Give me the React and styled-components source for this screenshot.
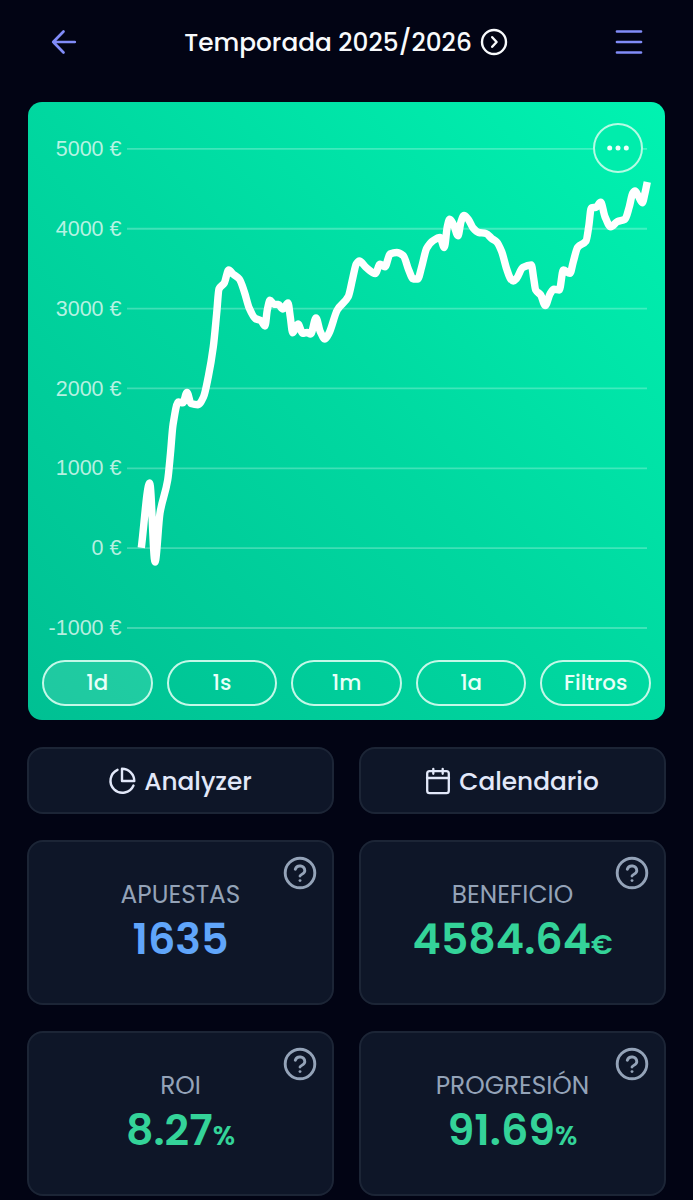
import React from 'react';
import styled, { createGlobalStyle } from 'styled-components';

const GlobalStyle = createGlobalStyle`
  * {
    box-sizing: border-box;
  }

  body {
    background: #020414;
    font-family: Poppins, Inter, 'Open Sans', sans-serif;
    height: 1200px;
    margin: 0;
    overflow: hidden;
  }

  button {
    background: none;
    border: 0;
    color: inherit;
    font: inherit;
    padding: 0;
  }

  svg {
    display: block;
    flex-shrink: 0;
  }
`;

const Page = styled.main`
  height: 1200px;
  overflow: hidden;
  padding: 0 27px;
  width: 693px;
`;

const Header = styled.header`
  align-items: center;
  color: #818cf8;
  display: flex;
  height: 84px;
  justify-content: space-between;
  padding: 0 23px 0 24px;
`;

const Season = styled.button`
  align-items: center;
  color: #f8fafc;
  display: flex;
  font-size: 24.8px;
  font-weight: 500;
  gap: 8px;
  white-space: nowrap;

  span {
    padding-top: 1px;
  }
`;

const ChartCard = styled.section`
  background: linear-gradient(45deg, #00c093 0%, #00d8a0 50%, #00f3b1 100%);
  border-radius: 14px;
  height: 618px;
  margin: 18px 1px 0;
  padding-top: 1px;
  position: relative;
`;

const MoreButton = styled.button`
  align-items: center;
  background: #00edac;
  border: 2px solid #b5fbe4;
  border-radius: 50%;
  display: flex;
  height: 50px;
  justify-content: center;
  position: absolute;
  right: 22px;
  top: 21px;
  width: 50px;
`;

const Filters = styled.div`
  display: grid;
  gap: 14px;
  grid-template-columns: repeat(5, 1fr);
  padding: 0 14px;
`;

const Filter = styled.button`
  background: ${p => (p.$active ? 'rgba(255, 255, 255, 0.12)' : 'none')};
  border: 2px solid #c4f8e8;
  border-radius: 23px;
  color: #e9fff8;
  font-size: 21.3px;
  font-weight: 500;
  height: 46px;
  line-height: 42px;
`;

const Grid = styled.div`
  display: grid;
  gap: 26px 25px;
  grid-template-columns: 1fr 1fr;
  margin-top: 27px;
`;

const ActionButton = styled.button`
  align-items: center;
  background: #0e1628;
  border: 2px solid #1c2536;
  border-radius: 16px;
  color: #e2e8f9;
  display: flex;
  font-size: 24.8px;
  font-weight: 500;
  gap: 8px;
  height: 67px;
  justify-content: center;
  padding-right: 1px;

  span {
    padding-top: 1px;
  }
`;

const StatCard = styled.article`
  align-items: center;
  background: #0e1628;
  border: 2px solid #1c2536;
  border-radius: 16px;
  display: flex;
  flex-direction: column;
  height: 165px;
  padding-top: 37px;
  position: relative;
`;

const HelpButton = styled.button`
  position: absolute;
  right: 15px;
  top: 14px;
`;

const StatLabel = styled.h2`
  color: #94a3b8;
  font-size: 24.8px;
  font-weight: 400;
  line-height: 32px;
  margin: 0;
`;

const StatValue = styled.p`
  color: ${p => p.$color};
  font-size: 42.8px;
  font-weight: 600;
  line-height: 57px;
  margin: 0;

  small {
    font-size: 27px;
  }
`;

const AxisLabel = styled.text`
  fill: rgba(255, 255, 255, 0.72);
  font-family: 'Liberation Sans', Arial, sans-serif;
  font-size: 21.5px;
  text-anchor: end;
`;

const ticks = [5000, 4000, 3000, 2000, 1000, 0, -1000];

const points = [
  [141.3, 547.7], [149.7, 483], [155, 562], [160, 513], [167.7, 480],
  [170.5, 453], [173, 425], [178.3, 402], [182.8, 402.8], [187, 392.5],
  [191, 403.5], [198, 404.7], [203.5, 397], [208.3, 376.7], [213.3, 346.7],
  [216.7, 313], [219, 289], [224.3, 283], [228.7, 270], [233.3, 274.3],
  [239.3, 279], [244.3, 291.7], [249.3, 308.3], [255.3, 318.5], [261, 320.7],
  [265, 326], [267.3, 310], [270, 300.3], [274, 304.3], [278.3, 304.5],
  [283, 309], [288, 303], [290.3, 317], [292.7, 332.7], [298, 324],
  [302.7, 333.3], [307, 332.5], [310.7, 334], [316, 318], [320.3, 331.7],
  [325, 339], [329, 333.3], [337.3, 310], [348.3, 296.5], [352.7, 278.3],
  [356.3, 264], [359.3, 261], [366, 267.3], [375.3, 273.5], [380, 264.3],
  [385, 266.7], [390, 254], [396.7, 252.5], [403.3, 255.7], [408.7, 270],
  [413.3, 279], [417.7, 279], [421.7, 266.7], [426.7, 248.3], [433.3, 240.5],
  [440, 237.5], [444.3, 247.5], [447.3, 226.7], [449.7, 219.3], [453.7, 225],
  [458, 235.7], [461, 221.7], [464, 215.5], [468.3, 219.3], [473.3, 228.3],
  [478.3, 232.3], [486, 233.5], [491.7, 238.5], [496.7, 242], [501.7, 251.7],
  [506.7, 269], [510.7, 279], [513.3, 281], [516.7, 278.3], [522.7, 267.5],
  [531.3, 265], [533.7, 278.3], [535.7, 290], [540.7, 295], [545.3, 305.5],
  [550, 294], [554, 289.3], [559.3, 290], [563.3, 270], [570, 273.3],
  [573.3, 261.7], [577.7, 247.3], [586, 241], [588.7, 226.7], [591.3, 207.8],
  [596, 207.3], [600.7, 202.3], [605, 216.7], [610.7, 226.7], [617.3, 221.7],
  [625, 219.3], [629.3, 206.7], [632.7, 193.3], [635, 191], [638.3, 196],
  [642.3, 202.7], [645, 193], [647.3, 182]
];

// Monotone cubic interpolation, so the curve never overshoots a value
const toPath = pts => {
  const slopes = pts
    .slice(1)
    .map(([x, y], i) => (y - pts[i][1]) / (x - pts[i][0]));
  const tangents = pts.map((_, i) => {
    if (i === 0) return slopes[0];
    if (i === pts.length - 1) return slopes[i - 1];
    const a = slopes[i - 1];
    const b = slopes[i];
    return a * b <= 0 ? 0 : (2 * a * b) / (a + b);
  });

  return pts.slice(1).reduce((d, [x, y], i) => {
    const [px, py] = pts[i];
    const h = (x - px) / 3;
    return `${d} C${px + h},${py + h * tangents[i]} ${x - h},${y -
      h * tangents[i + 1]} ${x},${y}`;
  }, `M${pts[0]}`);
};

const filters = ['1d', '1s', '1m', '1a', 'Filtros'];

const stats = [
  { label: 'APUESTAS', value: '1635', color: '#60a5fa' },
  { label: 'BENEFICIO', value: '4584.64', unit: '€', color: '#34d399' },
  { label: 'ROI', value: '8.27', unit: '%', color: '#34d399' },
  { label: 'PROGRESIÓN', value: '91.69', unit: '%', color: '#34d399' }
];

const strokeProps = {
  fill: 'none',
  stroke: 'currentColor',
  strokeLinecap: 'round',
  strokeLinejoin: 'round'
};

const BackIcon = () => (
  <svg width="26" height="26" viewBox="0 0 26 26" {...strokeProps} strokeWidth="2.7">
    <path d="M23.8 13H2.2M12.5 2.5 2.2 13l10.3 10.5" />
  </svg>
);

const MenuIcon = () => (
  <svg width="28" height="26" viewBox="0 0 28 26" {...strokeProps} strokeWidth="2.7">
    <path d="M2 2.5h24M2 13h24M2 23.5h24" />
  </svg>
);

const NextIcon = () => (
  <svg width="28" height="28" viewBox="0 0 28 28" {...strokeProps} strokeWidth="2.4">
    <circle cx="14" cy="14" r="12" />
    <path d="m12.2 9.2 4.4 4.8-4.4 4.8" />
  </svg>
);

const PieIcon = () => (
  <svg width="28" height="28" viewBox="0 0 28 28" {...strokeProps} strokeWidth="2.4">
    <path d="M9.5 2.8A12 12 0 1 0 25.5 18.5" />
    <path d="M14 1.8A12.3 12.3 0 0 1 26.3 14H14Z" />
  </svg>
);

const CalendarIcon = () => (
  <svg width="26" height="28" viewBox="0 0 26 28" {...strokeProps} strokeWidth="2.3">
    <rect x="2.2" y="4.2" width="21.6" height="22" rx="2.4" />
    <path d="M2 11h22M8.3 1.8v5M17.7 1.8v5" />
  </svg>
);

const HelpIcon = () => (
  <svg width="34" height="34" viewBox="0 0 34 34" {...strokeProps} stroke="#94a3b8" strokeWidth="2.9">
    <circle cx="17" cy="17" r="14.8" />
    <path d="M12.3 13.2a4.9 4.9 0 0 1 9.5 1.5c0 3.2-4.8 3.8-4.8 5.4" />
    <path d="M17 24.6h.02" />
  </svg>
);

const ProfitChart = () => (
  <svg width="636" height="557" viewBox="28 103 636 557">
    {ticks.map((tick, i) => (
      <g key={tick}>
        <path
          d={`M127 ${148.9 + i * 79.85}H647`}
          stroke="rgba(255, 255, 255, 0.25)"
          strokeWidth="1.8"
        />
        <AxisLabel x="121.5" y={156 + i * 79.85}>
          {tick} €
        </AxisLabel>
      </g>
    ))}
    <path
      d={toPath(points)}
      fill="none"
      stroke="#fff"
      strokeLinejoin="round"
      strokeWidth="7.4"
    />
  </svg>
);

const App = () => (
  <>
    <GlobalStyle />
    <Page>
      <Header>
        <BackIcon />
        <Season>
          <span>Temporada 2025/2026</span>
          <NextIcon />
        </Season>
        <MenuIcon />
      </Header>

      <ChartCard>
        <ProfitChart />
        <MoreButton>
          <svg width="24" height="6" viewBox="0 0 24 6" fill="#f0fffa">
            <circle cx="3.7" cy="3" r="2.5" />
            <circle cx="12" cy="3" r="2.5" />
            <circle cx="20.3" cy="3" r="2.5" />
          </svg>
        </MoreButton>
        <Filters>
          {filters.map((label, i) => (
            <Filter key={label} $active={i === 0}>
              {label}
            </Filter>
          ))}
        </Filters>
      </ChartCard>

      <Grid>
        <ActionButton>
          <PieIcon />
          <span>Analyzer</span>
        </ActionButton>
        <ActionButton>
          <CalendarIcon />
          <span>Calendario</span>
        </ActionButton>

        {stats.map(({ label, value, unit, color }) => (
          <StatCard key={label}>
            <HelpButton>
              <HelpIcon />
            </HelpButton>
            <StatLabel>{label}</StatLabel>
            <StatValue $color={color}>
              {value}
              {unit && <small>{unit}</small>}
            </StatValue>
          </StatCard>
        ))}
      </Grid>
    </Page>
  </>
);

export default App;
